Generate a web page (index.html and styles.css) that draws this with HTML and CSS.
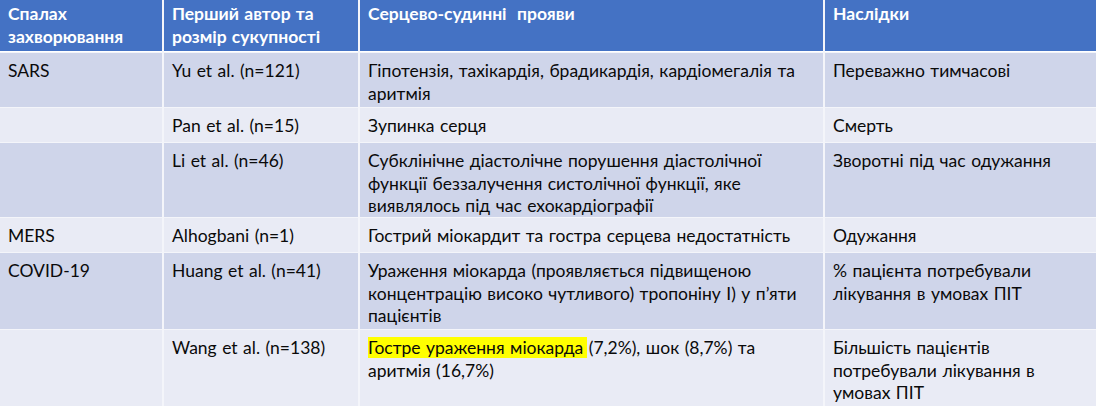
FILE: index.html
```html
<!DOCTYPE html>
<html lang="uk">
<head>
<meta charset="utf-8">
<title>Серцево-судинні прояви</title>
<link rel="stylesheet" href="styles.css">
</head>
<body>
<div class="table">
  <div class="cell head">Спалах захворювання</div>
  <div class="cell head">Перший автор та розмір сукупності</div>
  <div class="cell head">Серцево-судинні&nbsp; прояви</div>
  <div class="cell head">Наслідки</div>

  <div class="cell dark">SARS</div>
  <div class="cell dark">Yu et al. (n=121)</div>
  <div class="cell dark">Гіпотензія, тахікардія, брадикардія, кардіомегалія та аритмія</div>
  <div class="cell dark">Переважно тимчасові</div>

  <div class="cell light"></div>
  <div class="cell light">Pan et al. (n=15)</div>
  <div class="cell light">Зупинка серця</div>
  <div class="cell light">Смерть</div>

  <div class="cell dark"></div>
  <div class="cell dark">Li et al. (n=46)</div>
  <div class="cell dark">Субклінічне діастолічне порушення діастолічної функції беззалучення систолічної функції, яке виявлялось під час ехокардіографії</div>
  <div class="cell dark">Зворотні під час одужання</div>

  <div class="cell light">MERS</div>
  <div class="cell light">Alhogbani (n=1)</div>
  <div class="cell light">Гострий міокардит та гостра серцева недостатність</div>
  <div class="cell light">Одужання</div>

  <div class="cell dark">COVID-19</div>
  <div class="cell dark">Huang et al. (n=41)</div>
  <div class="cell dark">Ураження міокарда (проявляється підвищеною концентрацію високо чутливого) тропоніну І) у п’яти пацієнтів</div>
  <div class="cell dark">% пацієнта потребували лікування в умовах ПІТ</div>

  <div class="cell light"></div>
  <div class="cell light">Wang et al. (n=138)</div>
  <div class="cell light"><span class="mark">Гостре ураження міокарда</span> (7,2%), шок (8,7%) та аритмія (16,7%)</div>
  <div class="cell light">Більшість пацієнтів потребували лікування в умовах ПІТ</div>
</div>
</body>
</html>
```

FILE: styles.css
```css
html, body {
  margin: 0;
  padding: 0;
  background: #ffffff;
}

body {
  width: 1096px;
  height: 406px;
  overflow: hidden;
  font-family: "Lato", "Liberation Sans", sans-serif;
  font-size: 17.5px;
  color: #0a0a0a;
}

.table {
  display: grid;
  grid-template-columns: 162px 194px 463px 1fr;
  grid-template-rows: 52px 54px 34px 74px 34px 76px 80px;
  column-gap: 2px;
  row-gap: 1px;
  background: #f4f5fa;
}

.cell {
  padding: 7px 8px 0 8px;
  line-height: 22.5px;
  word-spacing: 1px;
}

.head {
  background: #4472c4;
  color: #ffffff;
  font-weight: bold;
  padding-top: 3px;
  border-bottom: 1px solid #ffffff;
}

.dark {
  background: #cfd5ea;
}

.light {
  background: #e9ebf5;
}

.mark {
  background: #ffff00;
  padding-right: 4px;
  margin-right: -4px;
}
```
